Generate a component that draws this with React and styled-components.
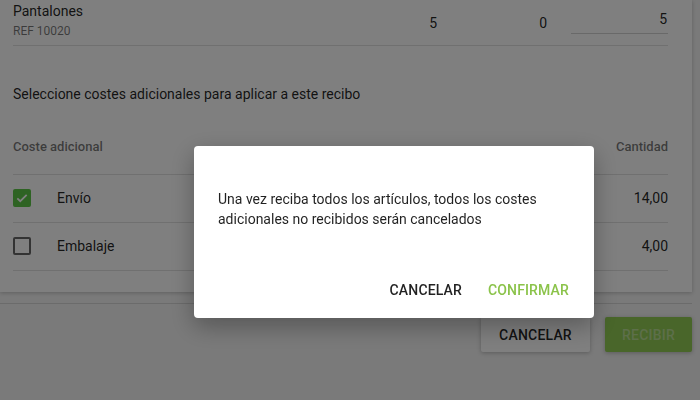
import React from "react";
import styled, { createGlobalStyle } from "styled-components";

const Global = createGlobalStyle`
  html, body { margin: 0; padding: 0; background: #f4f4f4; }
  body { font-family: Roboto, "Liberation Sans", Arial, sans-serif; color: rgba(0,0,0,0.87); overflow: hidden; }
  * { box-sizing: border-box; }
`;

const Page = styled.div`
  width: 692px;
  height: 400px;
`;

const Card = styled.div`
  background: #fff;
  box-shadow: 0 1px 4px rgba(0,0,0,0.22);
  padding: 1px 24px 21px 13px;
`;

const ItemRow = styled.div`
  display: grid;
  grid-template-columns: 1fr 80px 110px 97px;
  align-items: center;
  border-bottom: 1px solid #e0e0e0;
  padding-bottom: 6px;
  height: 45px;
`;

const ItemName = styled.div`
  font-size: 14px;
  line-height: 20px;
`;

const ItemRef = styled.div`
  font-size: 12px;
  line-height: 18px;
  color: rgba(0,0,0,0.54);
  margin-top: 1px;
`;

const Num = styled.div`
  font-size: 14px;
  text-align: right;
  padding-right: 24px;
  margin-top: 4px;
`;

const QtyInput = styled.div`
  font-size: 14px;
  text-align: right;
  padding: 0 1px 6px 0;
  border-bottom: 1px solid #d2d2d2;
  margin-top: 3px;
`;

const Intro = styled.p`
  margin: 38px 0 0;
  font-size: 14px;
  line-height: 20px;
`;

const HeadRow = styled.div`
  display: flex;
  justify-content: space-between;
  align-items: center;
  height: 56px;
  margin-top: 15px;
  border-bottom: 1px solid #e0e0e0;
  font-size: 13px;
  font-weight: 500;
  color: rgba(0,0,0,0.54);
  padding-bottom: 1px;
`;

const CostRow = styled.div`
  display: flex;
  align-items: center;
  height: 48px;
  border-bottom: 1px solid #e0e0e0;
  font-size: 14px;
  padding-bottom: 1px;
`;

const Box = styled.span`
  width: 18px;
  height: 18px;
  border-radius: 2px;
  flex: none;
  display: flex;
  align-items: center;
  justify-content: center;
  background: ${(p) => (p.checked ? "#5cc646" : "transparent")};
  border: ${(p) => (p.checked ? "none" : "2px solid rgba(0,0,0,0.6)")};
  margin-right: 26px;
`;

const CostName = styled.span`
  flex: 1;
`;

const Divider = styled.div`
  height: 1px;
  background: #d6d6d6;
  margin-top: 11px;
`;

const Footer = styled.div`
  display: flex;
  justify-content: flex-end;
  gap: 15px;
  margin-top: 13px;
`;

const RaisedButton = styled.button`
  font-family: inherit;
  font-size: 14px;
  font-weight: 500;
  letter-spacing: 0.2px;
  height: 35px;
  border: none;
  border-radius: 2px;
  padding: 0 16px;
  background: ${(p) => (p.primary ? "#92cc54" : "#ffffff")};
  color: ${(p) => (p.primary ? "rgba(255,255,255,0.38)" : "rgba(0,0,0,0.87)")};
  box-shadow: 0 1px 4px rgba(0,0,0,0.25);
  width: ${(p) => p.w}px;
`;

const Overlay = styled.div`
  position: fixed;
  inset: 0;
  background: rgba(0,0,0,0.5);
  display: flex;
  justify-content: center;
  align-items: center;
  padding: 64px 0 0 88px;
`;

const Dialog = styled.div`
  width: 400px;
  height: 172px;
  background: #fff;
  border-radius: 4px;
  box-shadow: 0 8px 24px rgba(0,0,0,0.3);
  display: flex;
  flex-direction: column;
`;

const DialogText = styled.p`
  margin: 0;
  padding: 43px 24px 0;
  font-size: 14px;
  line-height: 20px;
  flex: 1;
`;

const DialogActions = styled.div`
  display: flex;
  justify-content: flex-end;
  gap: 10px;
  padding: 0 17px 10px;
`;

const FlatButton = styled.button`
  font-family: inherit;
  font-size: 14px;
  font-weight: 500;
  letter-spacing: 0.15px;
  height: 36px;
  padding: 0 8px;
  border: none;
  background: transparent;
  color: ${(p) => (p.primary ? "#8bc34a" : "rgba(0,0,0,0.87)")};
`;

const Check = () => (
  <svg width="14" height="14" viewBox="0 0 24 24">
    <path d="M4 12.5l5 5L20 6.5" fill="none" stroke="#fff" strokeWidth="3" />
  </svg>
);

export default function App() {
  return (
    <>
      <Global />
      <Page>
        <Card>
          <ItemRow>
            <div>
              <ItemName>Pantalones</ItemName>
              <ItemRef>REF 10020</ItemRef>
            </div>
            <Num>5</Num>
            <Num>0</Num>
            <QtyInput>5</QtyInput>
          </ItemRow>
          <Intro>Seleccione costes adicionales para aplicar a este recibo</Intro>
          <HeadRow>
            <span>Coste adicional</span>
            <span>Cantidad</span>
          </HeadRow>
          <CostRow>
            <Box checked>
              <Check />
            </Box>
            <CostName>Envío</CostName>
            <span>14,00</span>
          </CostRow>
          <CostRow>
            <Box />
            <CostName>Embalaje</CostName>
            <span>4,00</span>
          </CostRow>
        </Card>
        <Divider />
        <Footer>
          <RaisedButton w={109}>CANCELAR</RaisedButton>
          <RaisedButton primary w={87}>RECIBIR</RaisedButton>
        </Footer>
      </Page>
      <Overlay>
        <Dialog>
          <DialogText>
            Una vez reciba todos los artículos, todos los costes adicionales no recibidos serán cancelados
          </DialogText>
          <DialogActions>
            <FlatButton>CANCELAR</FlatButton>
            <FlatButton primary>CONFIRMAR</FlatButton>
          </DialogActions>
        </Dialog>
      </Overlay>
    </>
  );
}
